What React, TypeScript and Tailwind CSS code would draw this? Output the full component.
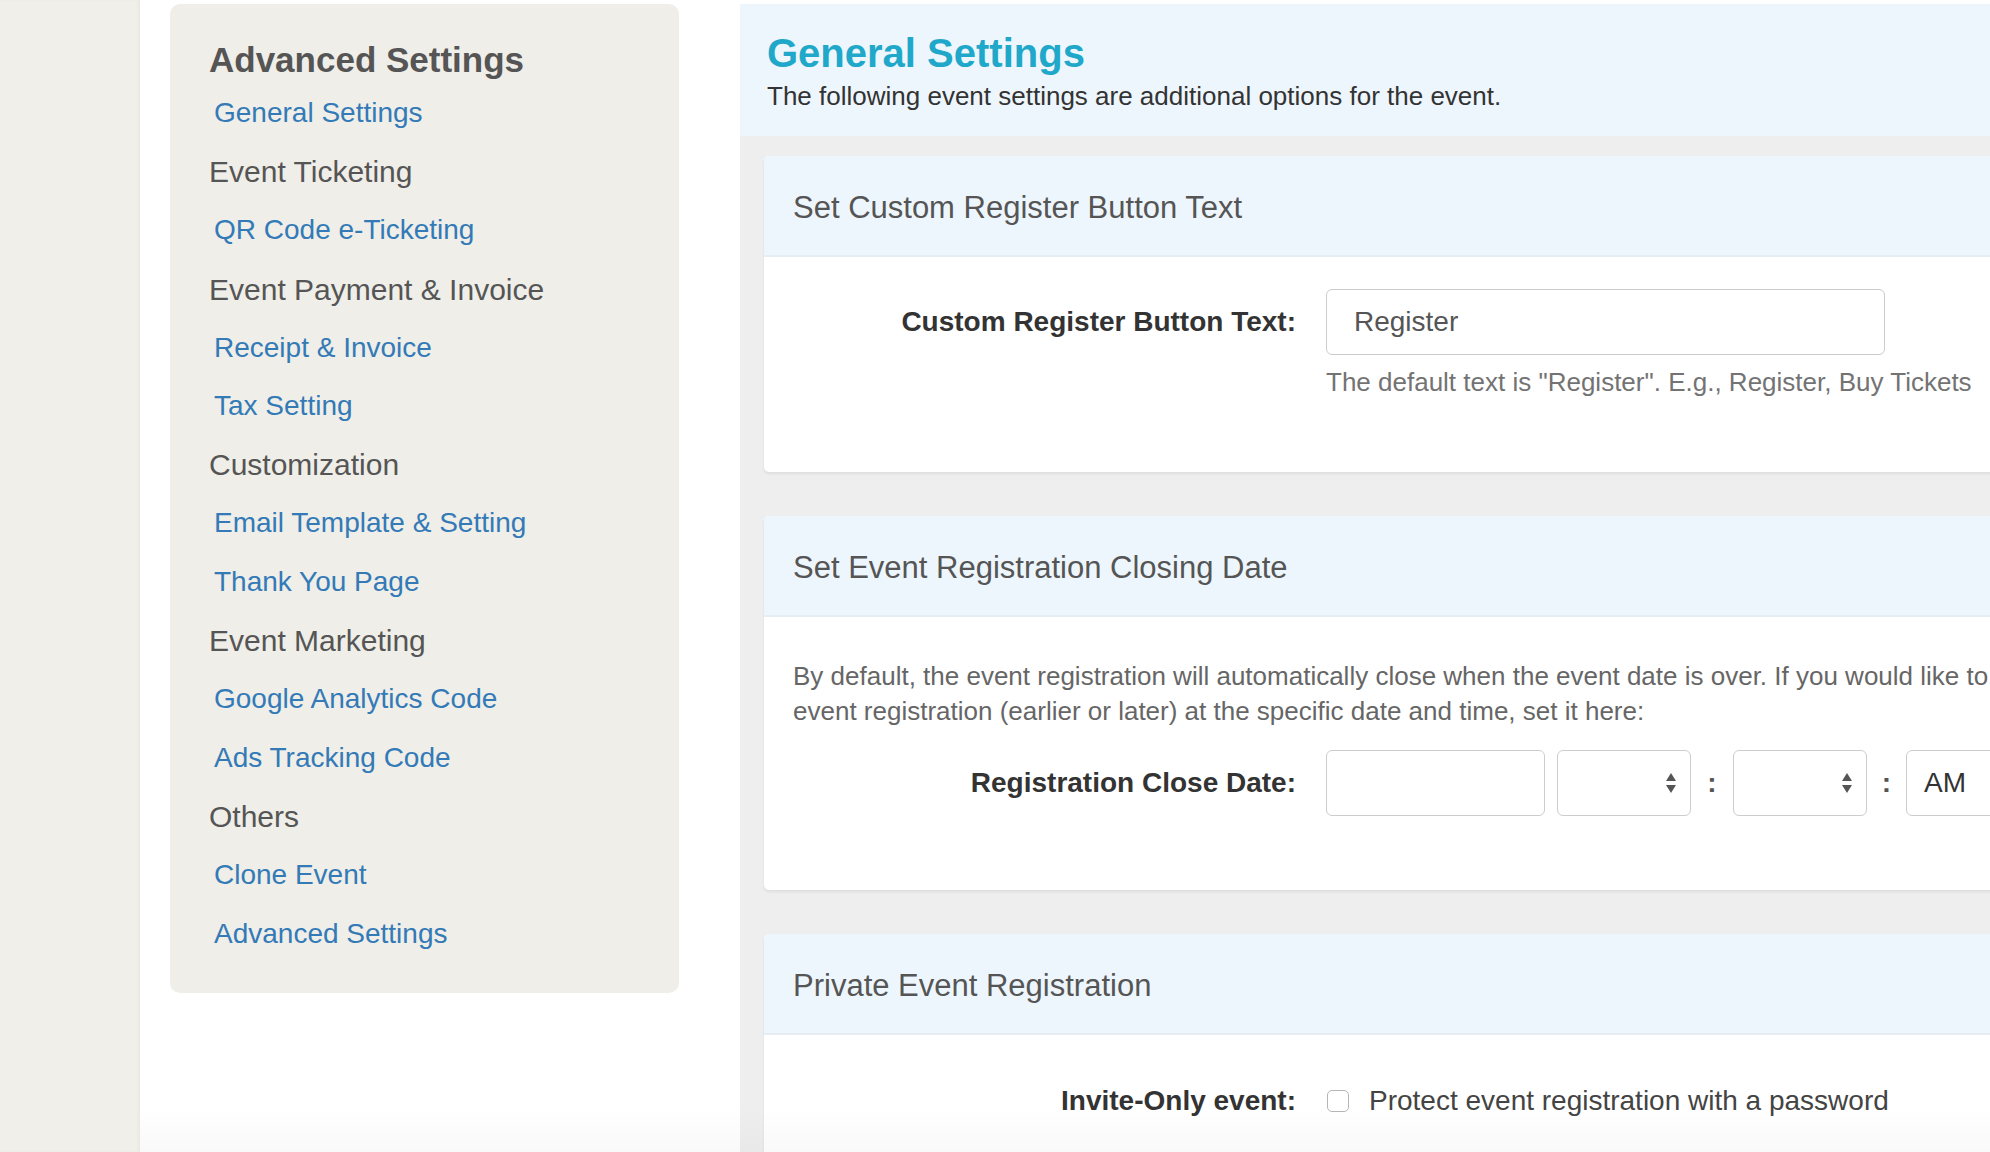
import React from "react";

const menu: { label: string; link?: boolean }[] = [
  { label: "General Settings", link: true },
  { label: "Event Ticketing" },
  { label: "QR Code e-Ticketing", link: true },
  { label: "Event Payment & Invoice" },
  { label: "Receipt & Invoice", link: true },
  { label: "Tax Setting", link: true },
  { label: "Customization" },
  { label: "Email Template & Setting", link: true },
  { label: "Thank You Page", link: true },
  { label: "Event Marketing" },
  { label: "Google Analytics Code", link: true },
  { label: "Ads Tracking Code", link: true },
  { label: "Others" },
  { label: "Clone Event", link: true },
  { label: "Advanced Settings", link: true },
];

function SelectBox({ width }: { width: string }) {
  return (
    <div className={`${width} h-[66px] border border-[#cccccc] rounded-[6px] bg-white flex items-center justify-end pr-[13px]`}>
      <svg width="12" height="22" viewBox="0 0 12 22">
        <path d="M6 1 L11 9 L1 9 Z" fill="#555" />
        <path d="M6 21 L11 13 L1 13 Z" fill="#555" />
      </svg>
    </div>
  );
}

function CardHeader({ title }: { title: string }) {
  return (
    <div className="h-[101px] bg-[#eef6fd] border-b-2 border-[#e6edf3] flex items-center pl-[29px] pt-[6px] text-[31px] text-[#555555]">
      {title}
    </div>
  );
}

export default function App() {
  return (
    <div className="w-[1990px] h-[1152px] overflow-hidden flex relative font-['Liberation_Sans',Arial,sans-serif]">
      {/* paper strip */}
      <div className="w-[140px] shrink-0 bg-[#f0efe9] shadow-[inset_-2px_0_3px_rgba(0,0,0,0.03)]" />

      {/* sidebar column */}
      <div className="w-[600px] shrink-0 bg-white pt-[4px] pl-[30px]">
        <div className="w-[509px] h-[989px] rounded-[10px] bg-[#efeee8] pt-[32px] pl-[39px]">
          <div className="h-[48px] leading-[48px] text-[35px] font-bold text-[#555555]">Advanced Settings</div>
          {menu.map((m) => (
            <div
              key={m.label}
              className={`h-[58.6px] flex items-center ${m.link ? "pl-[5px] text-[28px] text-[#337ab7]" : "text-[30px] text-[#555555]"}`}
            >
              {m.label}
            </div>
          ))}
        </div>
      </div>

      {/* main content */}
      <div className="flex-1 min-w-0 bg-white pt-[4px] flex flex-col">
        <div className="h-[132px] bg-[#eef6fd] pl-[27px] pt-[25px] shrink-0">
          <h1 className="text-[40px] leading-[48px] font-bold text-[#1fa8c9]">General Settings</h1>
          <p className="mt-[3px] text-[26px] leading-[32px] text-[#333333]">
            The following event settings are additional options for the event.
          </p>
        </div>

        <div className="flex-1 bg-[#eeeeee] pt-[20px] pl-[24px]">
          {/* card 1 */}
          <div className="w-[1400px] bg-white rounded-[5px] shadow-[0_2px_3px_rgba(0,0,0,0.07)] overflow-hidden mb-[44px]">
            <CardHeader title="Set Custom Register Button Text" />
            <div className="h-[215px] pt-[32px] pl-[29px]">
              <div className="flex items-center">
                <div className="w-[503px] text-right text-[28px] font-bold text-[#333333]">Custom Register Button Text:</div>
                <div className="ml-[30px] w-[559px] h-[66px] border border-[#cccccc] rounded-[6px] flex items-center pl-[27px] text-[28px] text-[#555555]">
                  Register
                </div>
              </div>
              <div className="ml-[533px] mt-[10px] text-[26px] leading-[35px] text-[#737373] whitespace-nowrap">
                The default text is "Register". E.g., Register, Buy Tickets
              </div>
            </div>
          </div>

          {/* card 2 */}
          <div className="w-[1400px] bg-white rounded-[5px] shadow-[0_2px_3px_rgba(0,0,0,0.07)] overflow-hidden mb-[44px]">
            <CardHeader title="Set Event Registration Closing Date" />
            <div className="h-[273px] pt-[42px] pl-[29px]">
              <p className="text-[26px] leading-[35px] text-[#666666] whitespace-nowrap">
                By default, the event registration will automatically close when the event date is over. If you would like to close the
                <br />
                event registration (earlier or later) at the specific date and time, set it here:
              </p>
              <div className="flex items-center mt-[21px]">
                <div className="w-[503px] text-right text-[28px] font-bold text-[#333333]">Registration Close Date:</div>
                <div className="ml-[30px] w-[219px] h-[66px] border border-[#cccccc] rounded-[6px] bg-white" />
                <div className="ml-[12px]">
                  <SelectBox width="w-[134px]" />
                </div>
                <div className="w-[42px] text-center text-[28px] font-bold text-[#555555]">:</div>
                <SelectBox width="w-[134px]" />
                <div className="w-[39px] text-center text-[28px] font-bold text-[#555555]">:</div>
                <div className="w-[134px] h-[66px] border border-[#cccccc] rounded-[6px] flex items-center pl-[17px] text-[28px] text-[#333333]">
                  AM
                </div>
              </div>
            </div>
          </div>

          {/* card 3 */}
          <div className="w-[1400px] bg-white rounded-[5px] shadow-[0_2px_3px_rgba(0,0,0,0.07)] overflow-hidden">
            <CardHeader title="Private Event Registration" />
            <div className="h-[200px] pt-[54px] pl-[29px]">
              <div className="flex items-center h-[24px]">
                <div className="w-[503px] text-right text-[28px] font-bold text-[#333333]">Invite-Only event:</div>
                <div className="ml-[31px] w-[22px] h-[22px] border border-[#b5b5b5] rounded-[5px] bg-white" />
                <div className="ml-[20px] text-[28px] text-[#444444] whitespace-nowrap">Protect event registration with a password</div>
              </div>
            </div>
          </div>
        </div>
      </div>

      {/* bottom fade */}
      <div className="absolute left-[140px] right-0 bottom-0 h-[45px] bg-gradient-to-b from-transparent to-[rgba(0,0,0,0.025)] pointer-events-none" />
    </div>
  );
}
